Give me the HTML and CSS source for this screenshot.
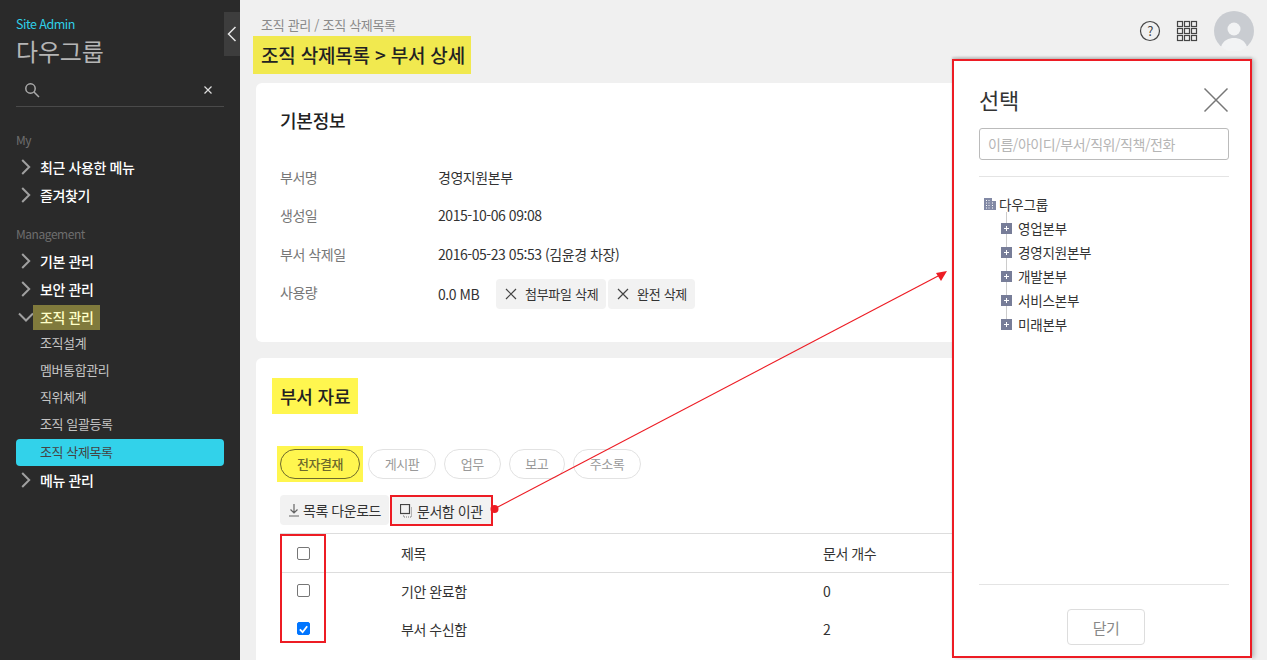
FILE: index.html
```html
<!DOCTYPE html>
<html lang="ko">
<head>
<meta charset="utf-8">
<title>조직 삭제목록</title>
<link rel="stylesheet" href="styles.css">
</head>
<body>
<div class="page">
  <aside class="sidebar">
    <button class="collapse" type="button"><svg width="10" height="16" viewBox="0 0 10 16"><path d="M8.500 1 1.500 8l7 7" class="ic-white"/></svg></button>
    <div class="site-label">Site Admin</div>
    <div class="site-name">다우그룹</div>
    <div class="search">
      <svg width="16" height="16" viewBox="0 0 16 16"><circle cx="6.500" cy="6.500" r="4.700" class="ic-grey"/><path d="m10 10 5 5" class="ic-grey"/></svg>
      <svg width="8" height="8" viewBox="0 0 8 8"><path d="m.5.5 7 7m0-7-7 7" class="ic-light"/></svg>
    </div>
    <div class="nav-head nav-head-my">My</div>
    <div class="nav-item"><svg class="chev" width="10" height="16" viewBox="0 0 10 16"><path d="m1.200 1 7 7-7 7"/></svg>최근 사용한 메뉴</div>
    <div class="nav-item"><svg class="chev" width="10" height="16" viewBox="0 0 10 16"><path d="m1.200 1 7 7-7 7"/></svg>즐겨찾기</div>
    <div class="nav-head nav-head-mgmt">Management</div>
    <div class="nav-item"><svg class="chev" width="10" height="16" viewBox="0 0 10 16"><path d="m1.200 1 7 7-7 7"/></svg>기본 관리</div>
    <div class="nav-item"><svg class="chev" width="10" height="16" viewBox="0 0 10 16"><path d="m1.200 1 7 7-7 7"/></svg>보안 관리</div>
    <div class="nav-item nav-open"><svg class="chev-down" width="16" height="10" viewBox="0 0 16 10"><path d="m1 1.500 7 7 7-7"/></svg><span class="nav-mark">조직 관리</span></div>
    <div class="nav-sub">조직설계</div>
    <div class="nav-sub">멤버통합관리</div>
    <div class="nav-sub">직위체계</div>
    <div class="nav-sub">조직 일괄등록</div>
    <div class="nav-sub nav-sub-active">조직 삭제목록</div>
    <div class="nav-item"><svg class="chev" width="10" height="16" viewBox="0 0 10 16"><path d="m1.200 1 7 7-7 7"/></svg>메뉴 관리</div>
  </aside>

  <main class="main">
    <header class="header">
      <div class="heading">
        <div class="crumb">조직 관리 / 조직 삭제목록</div>
        <h1 class="title">조직 삭제목록 &gt; 부서 상세</h1>
      </div>
      <div class="actions">
        <svg width="22" height="22" viewBox="0 0 22 22"><circle cx="11" cy="11" r="9.500" class="ic-dark"/><text x="11" y="15.500" class="help-mark">?</text></svg>
        <svg width="22" height="22" viewBox="0 0 22 22" class="ic-grid"><rect x="1.500" y="1.500" width="5" height="5"/><rect x="8.500" y="1.500" width="5" height="5"/><rect x="15.500" y="1.500" width="5" height="5"/><rect x="1.500" y="8.500" width="5" height="5"/><rect x="8.500" y="8.500" width="5" height="5"/><rect x="15.500" y="8.500" width="5" height="5"/><rect x="1.500" y="15.500" width="5" height="5"/><rect x="8.500" y="15.500" width="5" height="5"/><rect x="15.500" y="15.500" width="5" height="5"/></svg>
        <div class="avatar"><svg width="40" height="40" viewBox="0 0 40 40"><circle cx="20" cy="20" r="20" fill="#c9ccd1"/><circle cx="20" cy="18" r="6.500" fill="#f2f3f4"/><path d="M7 36c2-7 8-9 13-9s11 2 13 9a20 20 0 0 1-26 0z" fill="#f2f3f4"/></svg></div>
      </div>
    </header>

    <section class="card card-info">
      <h2 class="card-title">기본정보</h2>
      <div class="info-row"><div class="info-label">부서명</div><div>경영지원본부</div></div>
      <div class="info-row"><div class="info-label">생성일</div><div>2015-10-06 09:08</div></div>
      <div class="info-row"><div class="info-label">부서 삭제일</div><div>2016-05-23 05:53 (김윤경 차장)</div></div>
      <div class="info-row">
        <div class="info-label">사용량</div>
        <div class="usage">
          <span class="usage-value">0.0 MB</span>
          <button class="btn btn-file" type="button"><svg width="12" height="12" viewBox="0 0 12 12"><path d="m1 1 10 10m0-10L1 11" class="ic-dark"/></svg>첨부파일 삭제</button>
          <button class="btn btn-all" type="button"><svg width="12" height="12" viewBox="0 0 12 12"><path d="m1 1 10 10m0-10L1 11" class="ic-dark"/></svg>완전 삭제</button>
        </div>
      </div>
    </section>

    <section class="card card-docs">
      <h2 class="docs-title">부서 자료</h2>
      <div class="tabs">
        <span class="tab-mark"><button class="tab tab-active" type="button">전자결재</button></span>
        <button class="tab" type="button">게시판</button>
        <button class="tab" type="button">업무</button>
        <button class="tab" type="button">보고</button>
        <button class="tab" type="button">주소록</button>
      </div>
      <div class="toolbar">
        <button class="btn btn-down" type="button"><svg width="12" height="14" viewBox="0 0 12 14"><path d="M6 1v9M2.500 6.500 6 10l3.500-3.500M1 13h10" class="ic-mid"/></svg>목록 다운로드</button>
        <button class="btn btn-move" type="button"><svg width="14" height="14" viewBox="0 0 14 14"><rect x=".5" y=".5" width="9" height="9" class="ic-dark"/><path d="M11.500 3.500v9.500H3.500v-1.500" class="ic-dots"/></svg>문서함 이관</button>
      </div>
      <div class="table-wrap">
        <table class="doc-table">
          <thead><tr><th class="cell-check"><span class="check"></span></th><th>제목</th><th>문서 개수</th></tr></thead>
          <tbody>
            <tr><td class="cell-check"><span class="check"></span></td><td>기안 완료함</td><td>0</td></tr>
            <tr><td class="cell-check"><span class="check check-on"><svg width="12" height="12" viewBox="0 0 12 12"><path d="m2 6.500 3 3 5-6.500"/></svg></span></td><td>부서 수신함</td><td>2</td></tr>
          </tbody>
        </table>
        <div class="check-outline"></div>
      </div>
    </section>
  </main>

  <aside class="panel">
    <div class="panel-head">
      <div class="panel-title">선택</div>
      <svg width="26" height="26" viewBox="0 0 26 26"><path d="m1.500 1.500 23 23m0-23-23 23" class="ic-close"/></svg>
    </div>
    <div class="panel-input">이름/아이디/부서/직위/직책/전화</div>
    <div class="tree">
      <div class="tree-root"><svg width="14" height="14" viewBox="0 0 14 14"><path d="M1 1h8v3h4v9H1z" fill="#8289a5"/><path d="M3 3.500h1m1.500 0h1M3 6h1m1.500 0h1m2.500 0h1M3 8.500h1m1.500 0h1m2.500 0h1M3 11h1m1.500 0h1m2.500 0h1" stroke="#fff" fill="none"/></svg>다우그룹</div>
      <div class="tree-children">
        <div class="tree-node"><span class="plus"></span>영업본부</div>
        <div class="tree-node"><span class="plus"></span>경영지원본부</div>
        <div class="tree-node"><span class="plus"></span>개발본부</div>
        <div class="tree-node"><span class="plus"></span>서비스본부</div>
        <div class="tree-node"><span class="plus"></span>미래본부</div>
      </div>
    </div>
    <div class="panel-foot"><button class="panel-close" type="button">닫기</button></div>
  </aside>

  <svg class="arrow" width="1267" height="660" viewBox="0 0 1267 660">
    <path d="M494 509 940 275" stroke="#ed1c24" stroke-width="1.200" fill="none"/>
    <path d="m936 273 11-2-6 10z" fill="#ed1c24"/>
    <circle cx="494.500" cy="509" r="4" fill="#ed1c24"/>
  </svg>
</div>
</body>
</html>
```
FILE: styles.css
```css
* { box-sizing: border-box; }
html, body { margin: 0; height: 100%; overflow: hidden; }
body {
  font-family: "Noto Sans CJK KR", "Noto Sans", sans-serif;
  font-size: 14px;
  letter-spacing: -0.45px;
  color: #333;
  background: #f0f0f0;
}
button { font: inherit; letter-spacing: inherit; cursor: pointer; }
h1, h2 { margin: 0; }

.page { position: relative; display: flex; width: 1267px; height: 660px; overflow: hidden; }

.ic-white { fill: none; stroke: #e6e6e6; stroke-width: 1.500; }
.ic-grey { fill: none; stroke: #aaa; stroke-width: 1.500; }
.ic-light { fill: none; stroke: #ddd; stroke-width: 1.200; }
.ic-dark { fill: none; stroke: #444; stroke-width: 1.200; }
.ic-mid { fill: none; stroke: #666; stroke-width: 1.200; }
.ic-dots { fill: none; stroke: #777; stroke-width: 1; stroke-dasharray: 1 1; }
.ic-close { fill: none; stroke: #777; stroke-width: 1.500; }
.ic-grid rect { fill: none; stroke: #444; stroke-width: 1.200; }
.help-mark { font-size: 13px; fill: #444; text-anchor: middle; }

/* sidebar */
.sidebar {
  position: relative;
  flex: 0 0 240px;
  padding: 14px 16px 0;
  background: #2a2a2a;
  color: #fff;
}
.collapse {
  position: absolute;
  top: 12px;
  right: 0;
  display: flex;
  align-items: center;
  justify-content: center;
  width: 16px;
  height: 44px;
  padding: 0;
  border: 0;
  background: #3d3d3d;
}
.site-label { height: 20px; font-size: 12.500px; line-height: 20px; letter-spacing: -0.5px; color: #2fd0e8; }
.site-name { height: 36px; font-size: 24px; line-height: 34px; letter-spacing: -0.2px; color: #b5b5b5; }
.search {
  display: flex;
  align-items: center;
  justify-content: space-between;
  height: 37px;
  padding: 3px 12px 0 8px;
  border-bottom: 1px solid #4a4a4a;
}
.nav-head { height: 23px; font-size: 12px; line-height: 20px; color: #6e6e6e; }
.nav-head-my { margin-top: 23px; }
.nav-head-mgmt { margin-top: 15px; }
.nav-item {
  display: flex;
  align-items: center;
  height: 28px;
  padding-left: 5px;
  font-weight: 500;
  line-height: 28px;
  letter-spacing: -0.4px;
  color: #fff;
}
.chev { margin-right: 9px; fill: none; stroke: #a0a0a0; stroke-width: 2; }
.chev-down { margin: 0 1px 0 -3px; fill: none; stroke: #a0a0a0; stroke-width: 2; }
.nav-mark {
  display: block;
  height: 25px;
  margin-left: -2px;
  padding: 0 7px;
  line-height: 25px;
  background: #807a3c;
  color: #ffffc8;
}
.nav-open { margin-bottom: -1px; }
.nav-sub {
  height: 27px;
  padding-left: 24px;
  font-size: 13px;
  line-height: 25px;
  letter-spacing: -0.4px;
  color: #c4c4c4;
}
.nav-sub-active { margin-top: 1px; border-radius: 4px; background: #32d2ea; color: #444; }

/* main */
.main { flex: 1; min-width: 0; padding: 0 15px 0 16px; }
.header { display: flex; justify-content: space-between; height: 74px; margin-bottom: 9px; }
.heading { padding-top: 16px; }
.crumb { height: 18px; padding-left: 5px; font-size: 13px; line-height: 18px; letter-spacing: -0.3px; color: #8a8a8a; }
.title {
  display: inline-block;
  height: 38px;
  margin: 2px 0 0 -3px;
  padding: 0 6px 0 8px;
  font-size: 19px;
  font-weight: 500;
  line-height: 38px;
  letter-spacing: -0.2px;
  background: #f1e94f;
  color: #222;
}
.actions { display: flex; align-items: center; gap: 15px; height: 40px; margin: 11px -2px 0 0; }
.avatar { width: 40px; height: 40px; margin-left: 1px; }

.card { border-radius: 6px; background: #fff; }
.card-info { height: 259px; margin-bottom: 16px; padding: 24px; }
.card-title { height: 28px; margin-bottom: 23px; font-size: 18px; font-weight: 500; line-height: 26px; letter-spacing: -0.2px; color: #222; }
.info-row { display: flex; align-items: center; height: 38.250px; }
.info-label { flex: 0 0 158px; color: #777; }
.usage { display: flex; align-items: center; margin-top: 4px; }
.usage-value { width: 58px; }
.btn {
  display: flex;
  align-items: center;
  height: 30px;
  border: 0;
  border-radius: 4px;
  background: #f2f2f2;
  color: #333;
}
.btn-file { width: 110px; margin-right: 2px; padding: 0 0 0 9px; font-size: 13px; letter-spacing: -0.3px; }
.btn-all { width: 87px; padding: 0 0 0 9px; font-size: 13px; letter-spacing: -0.3px; }
.btn-file svg, .btn-all svg { margin-right: 8px; }

.card-docs { height: 400px; padding: 20px 24px 0; }
.docs-title {
  display: inline-block;
  height: 36px;
  margin-left: -8px;
  padding: 0 8px;
  font-size: 18px;
  font-weight: 500;
  line-height: 36px;
  letter-spacing: -0.2px;
  background: #fff64f;
  color: #222;
  vertical-align: top;
}
.tabs { display: flex; gap: 8px; margin-top: 35px; }
.tab {
  height: 30px;
  padding: 0 15.750px;
  border: 1px solid #e2e2e2;
  border-radius: 15px;
  background: #fff;
  font-size: 13px;
  line-height: 26px;
  color: #999;
}
.tab-mark { display: block; width: 86px; height: 36px; margin: -3px; padding: 3px; background: #fff64f; }
.tab-active { width: 80px; padding: 0; border-color: #6e6a2c; background: #fff64f; color: #6e6a2c; font-weight: 500; }
.toolbar { display: flex; gap: 1px; margin-top: 16px; height: 31px; }
.btn-down { width: 109px; padding: 0 0 0 8px; }
.btn-down svg { margin-right: 3px; }
.btn-move { width: 103px; height: 31px; padding: 0 0 0 8px; border: 2px solid #ed1c24; border-radius: 0; }
.btn-move svg { margin-right: 3px; }

.table-wrap { position: relative; margin-top: 7px; margin-right: -24px; }
.doc-table { width: 100%; border-collapse: collapse; table-layout: fixed; }
.doc-table th { height: 39px; padding: 0; border-top: 1px solid #ddd; border-bottom: 1px solid #ddd; font-weight: 400; text-align: left; }
.doc-table td { height: 38px; padding: 0 0 2px; }
.doc-table th:nth-child(1) { width: 121px; }
.doc-table th:nth-child(2) { width: 422px; }
.doc-table .cell-check { padding-left: 17px; }
.check {
  display: flex;
  align-items: center;
  justify-content: center;
  width: 13px;
  height: 13px;
  border: 1px solid #767676;
  border-radius: 2px;
  background: #fff;
}
.check-on { border-color: #0075ff; background: #0075ff; }
.check-on path { fill: none; stroke: #fff; stroke-width: 2; }
.check-outline {
  position: absolute;
  top: 1px;
  left: 0;
  width: 46px;
  height: 109px;
  border: 2px solid #ed1c24;
}

/* side panel */
.panel {
  position: absolute;
  top: 59px;
  left: 952px;
  display: flex;
  flex-direction: column;
  width: 300px;
  height: 599px;
  padding: 0 21px 0 25px;
  border: 2px solid #ed1c24;
  background: #fff;
  box-shadow: 3px 0 4px rgba(0, 0, 0, .18), 0 -2px 2px rgba(0, 0, 0, .15);
}
.panel-head { display: flex; align-items: center; justify-content: space-between; height: 67px; padding: 14px 0 6px; }
.panel-head svg { margin: 3px 0 0 0; }
.panel-title { font-size: 22px; line-height: 30px; letter-spacing: -0.2px; color: #333; }
.panel-input {
  height: 32px;
  padding-left: 8px;
  border: 1px solid #bbb;
  border-radius: 3px;
  line-height: 30px;
  color: #b5b5b5;
}
.tree { flex: 1; margin-top: 16px; padding: 15px 0 0 4px; border-top: 1px solid #e4e4e4; border-bottom: 1px solid #e4e4e4; font-size: 13.500px; letter-spacing: -0.2px; color: #333; }
.tree-root { display: flex; align-items: center; gap: 2px; height: 24px; }
.tree-children { position: relative; margin-left: 18px; }
.tree-children::before { content: ""; position: absolute; top: -4px; left: 5px; bottom: 12px; width: 1px; background: #ccc; }
.tree-node { position: relative; display: flex; align-items: center; gap: 6px; height: 24px; }
.plus {
  position: relative;
  width: 11px;
  height: 11px;
  background: linear-gradient(#fff, #fff) center / 5px 1px no-repeat, linear-gradient(#fff, #fff) center / 1px 5px no-repeat, #777d98;
}
.panel-foot { display: flex; justify-content: center; height: 71px; padding: 24px 0 0 4px; }
.panel-close {
  width: 78px;
  height: 36px;
  border: 1px solid #ddd;
  border-radius: 4px;
  background: #fff;
  font-size: 15px;
  color: #888;
}

.arrow { position: absolute; top: 0; left: 0; pointer-events: none; }
```
